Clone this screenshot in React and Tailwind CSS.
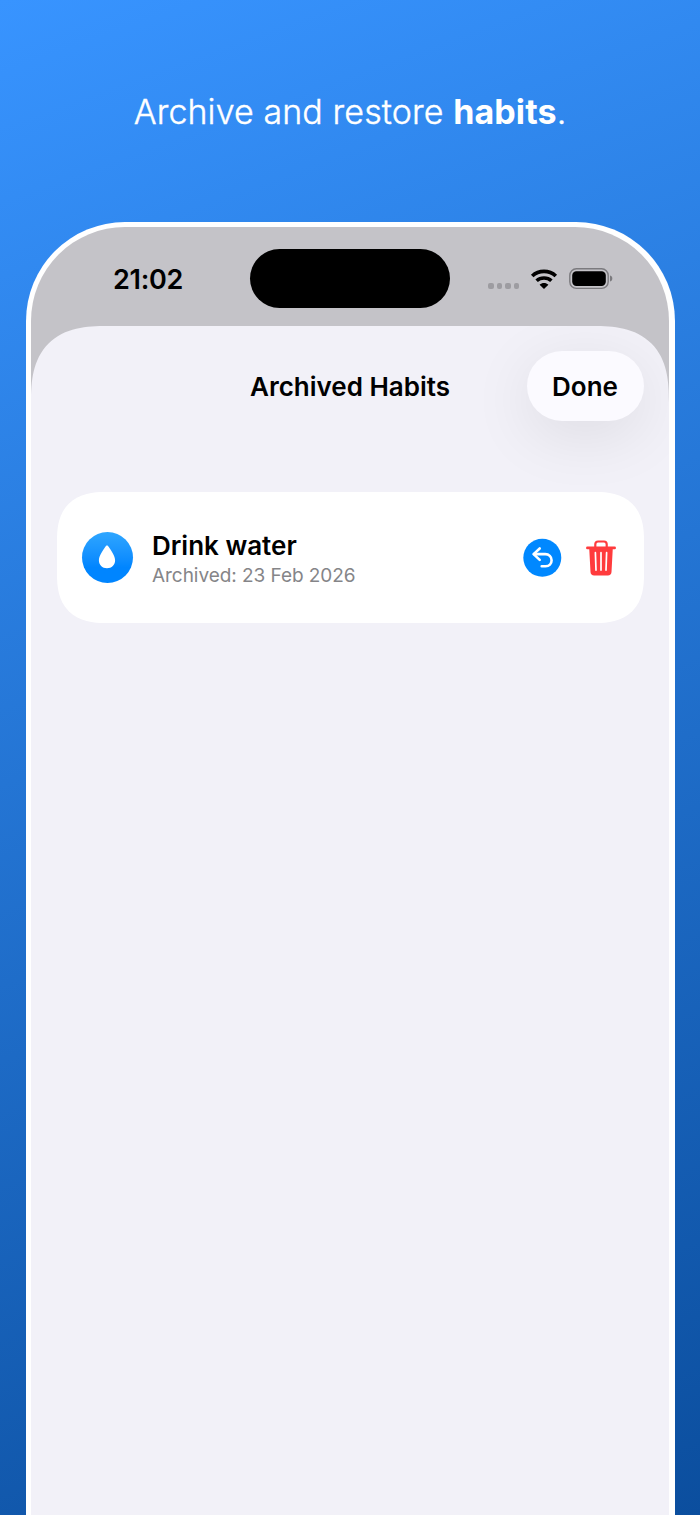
import React from 'react';

const archivedHabits = [
  { id: 1, name: 'Drink water', archivedAt: '23 Feb 2026' },
];

function WifiIcon() {
  return (
    <svg width="28" height="20" viewBox="0 0 28 20" fill="none" className="shrink-0">
      <path d="M2.2 7C8.8 .9 19.2 .9 25.8 7" stroke="#000" strokeWidth="3.7" />
      <path d="M6.6 11.8c4.1-3.8 10.7-3.8 14.8 0" stroke="#000" strokeWidth="3.6" />
      <path d="M9.6 15.7c2.5-2.2 6.3-2.2 8.8 0L14 20z" fill="#000" />
    </svg>
  );
}

function BatteryIcon() {
  return (
    <svg width="44" height="22" viewBox="0 0 44 22" className="shrink-0">
      <rect x=".8" y=".8" width="38.4" height="19.6" rx="6.6" fill="none" stroke="#7b7a7e" strokeWidth="1.4" />
      <rect x="3.2" y="3.2" width="33.6" height="14.8" rx="4.2" fill="#000" />
      <path d="M41 7.6c1.9.6 2.3 1.8 2.3 3s-.4 2.4-2.3 3z" fill="#7b7a7e" />
    </svg>
  );
}

function DropIcon() {
  return (
    <svg width="18" height="24" viewBox="0 0 18 24" className="shrink-0">
      <path
        d="M9 .4c-.8 0-1.3.7-1.7 1.4C5 5.7.9 10.6.9 15.3c0 4.7 3.3 8 8.1 8s8.1-3.3 8.1-8c0-4.7-4.1-9.6-6.4-13.5C10.3 1.1 9.8.4 9 .4z"
        fill="#fff"
      />
    </svg>
  );
}

function RestoreIcon() {
  return (
    <svg width="39" height="39" viewBox="0 0 39 39" className="shrink-0">
      <circle cx="19.3" cy="19.8" r="19" fill="#0088ff" />
      <g fill="none" stroke="#fff" strokeWidth="2.6" strokeLinecap="round" strokeLinejoin="round">
        <path d="M16.7 10.5l-6.1 5.6 6.1 5.8" />
        <path d="M11 16.1h11.3c3.6 0 6.3 2.7 6.3 6.1 0 3.5-2.5 6.1-6 6.1h-3.9" />
      </g>
    </svg>
  );
}

function TrashIcon() {
  return (
    <svg width="30" height="36" viewBox="0 0 30 36" className="shrink-0">
      <path
        d="M9.3 7V4.2c0-1.5 1-2.7 2.7-2.7h6c1.7 0 2.7 1.2 2.7 2.7V7"
        fill="none"
        stroke="#ff3b3d"
        strokeWidth="2.2"
      />
      <path d="M1.4 7.9h27.2" stroke="#ff3b3d" strokeWidth="2.7" strokeLinecap="round" />
      <path d="M3.2 8h23.6l-1.3 24c-.1 2.2-1.5 3.5-3.6 3.5H8.1c-2.1 0-3.5-1.3-3.6-3.5z" fill="#ff3b3d" />
      <path
        d="M9.4 12.7l.6 17.4M15 12.7v17.4M20.6 12.7l-.6 17.4"
        stroke="#fff"
        strokeWidth="1.7"
        strokeLinecap="round"
      />
    </svg>
  );
}

function StatusBar() {
  return (
    <div className="grid h-[98.5px] grid-cols-[219px_200px_1fr] pt-[22px]">
      <div className="pt-[13px] pl-[82px] text-[27px] leading-[36px] font-semibold tracking-[-0.3px]">21:02</div>
      <div className="h-[58.5px] rounded-full bg-black" />
      <div className="flex h-[60.5px] items-center pl-[38px]">
        <div className="flex gap-[3px] pt-[13px]">
          <span className="size-[5.5px] rounded-[2px] bg-[#9d9ca1]" />
          <span className="size-[5.5px] rounded-[2px] bg-[#9d9ca1]" />
          <span className="size-[5.5px] rounded-[2px] bg-[#9d9ca1]" />
          <span className="size-[5.5px] rounded-[2px] bg-[#9d9ca1]" />
        </div>
        <div className="ml-[11px]">
          <WifiIcon />
        </div>
        <div className="ml-[11px]">
          <BatteryIcon />
        </div>
      </div>
    </div>
  );
}

function HabitRow({ habit }) {
  return (
    <div className="relative flex h-[131.5px] items-center rounded-[42px] bg-white pr-[28px] pl-[25px] supports-[corner-shape:squircle]:rounded-[48px] supports-[corner-shape:squircle]:[corner-shape:superellipse(1.3)]">
      <div className="flex size-[51px] shrink-0 items-center justify-center rounded-full bg-linear-to-b from-[#2ea6ff] to-[#0085ff] to-70%">
        <DropIcon />
      </div>
      <div className="ml-[19.5px] flex-1 pt-[4px]">
        <p className="text-[26px] leading-[34px] font-semibold text-black">{habit.name}</p>
        <p className="text-[19px] leading-[26px] tracking-[-0.05px] text-[#858588]">Archived: {habit.archivedAt}</p>
      </div>
      <button type="button" aria-label="Restore">
        <RestoreIcon />
      </button>
      <button type="button" aria-label="Delete" className="ml-6 pt-px">
        <TrashIcon />
      </button>
    </div>
  );
}

export default function App() {
  return (
    <div className="flex h-[1515px] w-[700px] flex-col items-center overflow-hidden bg-[linear-gradient(160deg,#3894ff,#0b4e9e)] font-['Inter',sans-serif]">
      <h1 className="h-[221.5px] shrink-0 pt-[88px] text-[34px] leading-[48px] font-light tracking-[0.1px] whitespace-nowrap text-white [-webkit-text-stroke:0.4px_white]">
        Archive and restore <span className="font-bold [-webkit-text-stroke:0]">habits</span>.
      </h1>

      <div className="w-[649px] flex-1 rounded-t-[99px] bg-white px-[5.5px] pt-[5.5px]">
        <div className="flex h-full flex-col overflow-hidden rounded-t-[94px] bg-[#c4c3c8]">
          <StatusBar />

          {/* Sheet */}
          <div className="flex-1 overflow-hidden rounded-t-[62px] bg-[#f2f1f8] px-[25.5px] pt-[25px] supports-[corner-shape:squircle]:rounded-t-[76px] supports-[corner-shape:squircle]:[corner-shape:superellipse(1.4)]">
            <div className="grid grid-cols-[1fr_auto_1fr] items-center">
              <h2 className="col-start-2 pt-0.5 text-[26px] leading-[36px] font-semibold text-black">Archived Habits</h2>
              <button
                type="button"
                className="h-[70px] w-[117px] justify-self-end rounded-full bg-[#fbfaff] pt-0.5 text-[26px] font-semibold text-black shadow-[0_14px_64px_rgba(0,0,0,0.09)]"
              >
                Done
              </button>
            </div>

            <div className="mt-[71px] space-y-4">
              {archivedHabits.map((habit) => (
                <HabitRow key={habit.id} habit={habit} />
              ))}
            </div>
          </div>
        </div>
      </div>
    </div>
  );
}
